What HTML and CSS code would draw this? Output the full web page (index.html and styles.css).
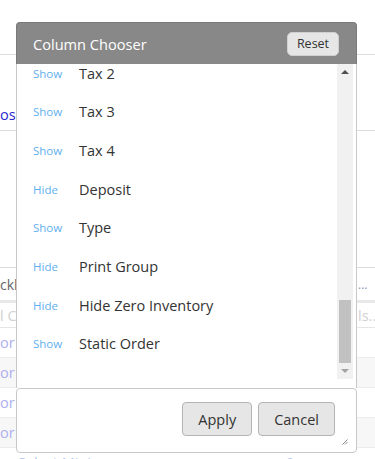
FILE: index.html
```html
<!DOCTYPE html>
<html>
<head>
<meta charset="utf-8">
<title>Column Chooser</title>
<link rel="stylesheet" href="styles.css">
</head>
<body>
<div class="page">
  <div class="bg-top"></div>
  <div class="bg-title"><span class="bg-link">osi</span></div>
  <div class="bg-blank"></div>
  <div class="bg-toolbar"><span class="bg-tool">ckl</span><span class="bg-dots">...</span></div>
  <div class="bg-band"></div>
  <div class="bg-filter"><span class="bg-ph">l Co</span><span class="bg-ph bg-right">ls...</span></div>
  <div class="bg-data"><span class="bg-cell">or</span></div>
  <div class="bg-data bg-alt"><span class="bg-cell">or</span></div>
  <div class="bg-data"><span class="bg-cell">or</span></div>
  <div class="bg-data bg-alt"><span class="bg-cell">or</span></div>
  <div class="bg-foot"><span class="bg-sel">Select Mini</span><span class="bg-zero">0</span></div>
</div>

<div class="dialog">
  <div class="dlg-head">
    <span class="dlg-title">Column Chooser</span>
    <button class="btn btn-reset">Reset</button>
  </div>
  <div class="dlg-body">
    <div class="list-wrap">
      <ul class="col-list">
        <li class="col-row"><span class="toggle">Show</span><span class="col-name">Tax 2</span></li>
        <li class="col-row"><span class="toggle">Show</span><span class="col-name">Tax 3</span></li>
        <li class="col-row"><span class="toggle">Show</span><span class="col-name">Tax 4</span></li>
        <li class="col-row"><span class="toggle">Hide</span><span class="col-name">Deposit</span></li>
        <li class="col-row"><span class="toggle">Show</span><span class="col-name">Type</span></li>
        <li class="col-row"><span class="toggle">Hide</span><span class="col-name">Print Group</span></li>
        <li class="col-row"><span class="toggle">Hide</span><span class="col-name">Hide Zero Inventory</span></li>
        <li class="col-row"><span class="toggle">Show</span><span class="col-name">Static Order</span></li>
      </ul>
    </div>
    <div class="scrollbar">
      <div class="sb-btn"><span class="arrow-up"></span></div>
      <div class="sb-track"><div class="sb-thumb"></div></div>
      <div class="sb-btn"><span class="arrow-down"></span></div>
    </div>
  </div>
  <div class="dlg-foot">
    <button class="btn btn-main">Apply</button>
    <button class="btn btn-main">Cancel</button>
    <svg class="grip" width="6" height="6" viewBox="0 0 6 6"><path d="M5.5 0.5 L0.5 5.5 M5.5 3 L3 5.5" stroke="#8a8a8a" stroke-width="1" fill="none"/></svg>
  </div>
</div>
</body>
</html>
```

FILE: styles.css
```css
* { box-sizing: border-box; }
html, body { margin: 0; padding: 0; background: #fff; }
body {
  font-family: "Open Sans", "Noto Sans", "Liberation Sans", sans-serif;
  width: 375px;
  height: 459px;
  overflow: hidden;
  position: relative;
}

/* background page */
.page { width: 375px; }
.bg-top { height: 55px; border-bottom: 1px solid #dcdcdc; }
.bg-title { height: 76px; padding-top: 48px; border-bottom: 1px solid #dcdcdc; }
.bg-link { font-size: 14.5px; line-height: 20px; color: #2a2ad0; }
.bg-blank { height: 137px; border-bottom: 1px solid #dcdcdc; }
.bg-toolbar { height: 32px; display: flex; align-items: center; }
.bg-tool { font-size: 14px; color: #666; }
.bg-dots { margin-left: auto; width: 17px; font-size: 12px; color: #8a8fb0; }
.bg-band { height: 3px; background: #e8e8e8; }
.bg-filter { height: 25px; display: flex; align-items: center; border-bottom: 1px solid #e6e6e6; }
.bg-ph { font-size: 14.5px; color: #d2d2d2; white-space: nowrap; }
.bg-right { margin-left: auto; width: 17px; overflow: hidden; }
.bg-data { height: 30px; display: flex; align-items: center; border-bottom: 1px solid #ececec; }
.bg-alt { background: #f7f7f7; }
.bg-cell { font-size: 14.5px; color: #aeaef0; }
.bg-foot { height: 20px; position: relative; }
.bg-sel { position: absolute; left: 18px; top: 5px; font-size: 14.5px; color: #b8c8ee; }
.bg-zero { position: absolute; left: 286px; top: 5px; font-size: 14.5px; color: #b8c8ee; }

/* dialog */
.dialog {
  position: absolute;
  left: 16px;
  top: 22px;
  width: 341px;
  height: 431px;
  display: flex;
  flex-direction: column;
  background: #fff;
  border-radius: 4px;
}
.dlg-head {
  height: 42px;
  flex: none;
  background: #888;
  border: 1px solid #7a7a7a;
  border-bottom: none;
  border-radius: 4px 4px 0 0;
  display: flex;
  align-items: center;
  padding: 0 17px 0 16px;
}
.dlg-title { color: #fff; font-size: 14.6px; flex: 1; }
.btn {
  font-family: inherit;
  color: #333;
  background: #e6e6e6;
  border: 1px solid #b4b4b4;
  border-radius: 4px;
  padding: 0;
  cursor: pointer;
}
.btn-reset {
  width: 52px;
  height: 24px;
  font-size: 12.5px;
  border-color: #d0d0d0;
  border-radius: 5px;
}
.dlg-body {
  height: 324px;
  flex: none;
  display: flex;
  border-left: 1px solid #c8c8c8;
  border-right: 1px solid #c8c8c8;
  padding-bottom: 9px;
}
.list-wrap { flex: 1; overflow: hidden; }
.col-list { list-style: none; margin: -10.35px 0 0; padding: 0; }
.col-row {
  height: 38.7px;
  display: flex;
  align-items: center;
  padding-left: 16px;
}
.toggle { width: 46px; font-size: 11.5px; color: #5fb0ef; }
.col-name { font-size: 14.5px; color: #333; }

.scrollbar {
  width: 16px;
  margin-right: 3px;
  background: #f1f1f1;
  display: flex;
  flex-direction: column;
}
.sb-btn { height: 17px; display: flex; align-items: center; justify-content: center; }
.arrow-up { width: 0; height: 0; border-left: 4px solid transparent; border-right: 4px solid transparent; border-bottom: 4px solid #505050; }
.arrow-down { width: 0; height: 0; border-left: 4px solid transparent; border-right: 4px solid transparent; border-top: 4px solid #a3a3a3; }
.sb-track { flex: 1; padding: 219px 2px 0; }
.sb-thumb { height: 63px; background: #c1c1c1; }

.dlg-foot {
  flex: 1;
  border: 1px solid #c8c8c8;
  border-radius: 4px;
  display: flex;
  justify-content: flex-end;
  align-items: flex-start;
  gap: 6px;
  padding: 13px 21px 0 0;
  position: relative;
}
.btn-main { height: 34px; font-size: 14.5px; padding: 0 15px; }
.grip { position: absolute; right: 8px; bottom: 7px; }
```
